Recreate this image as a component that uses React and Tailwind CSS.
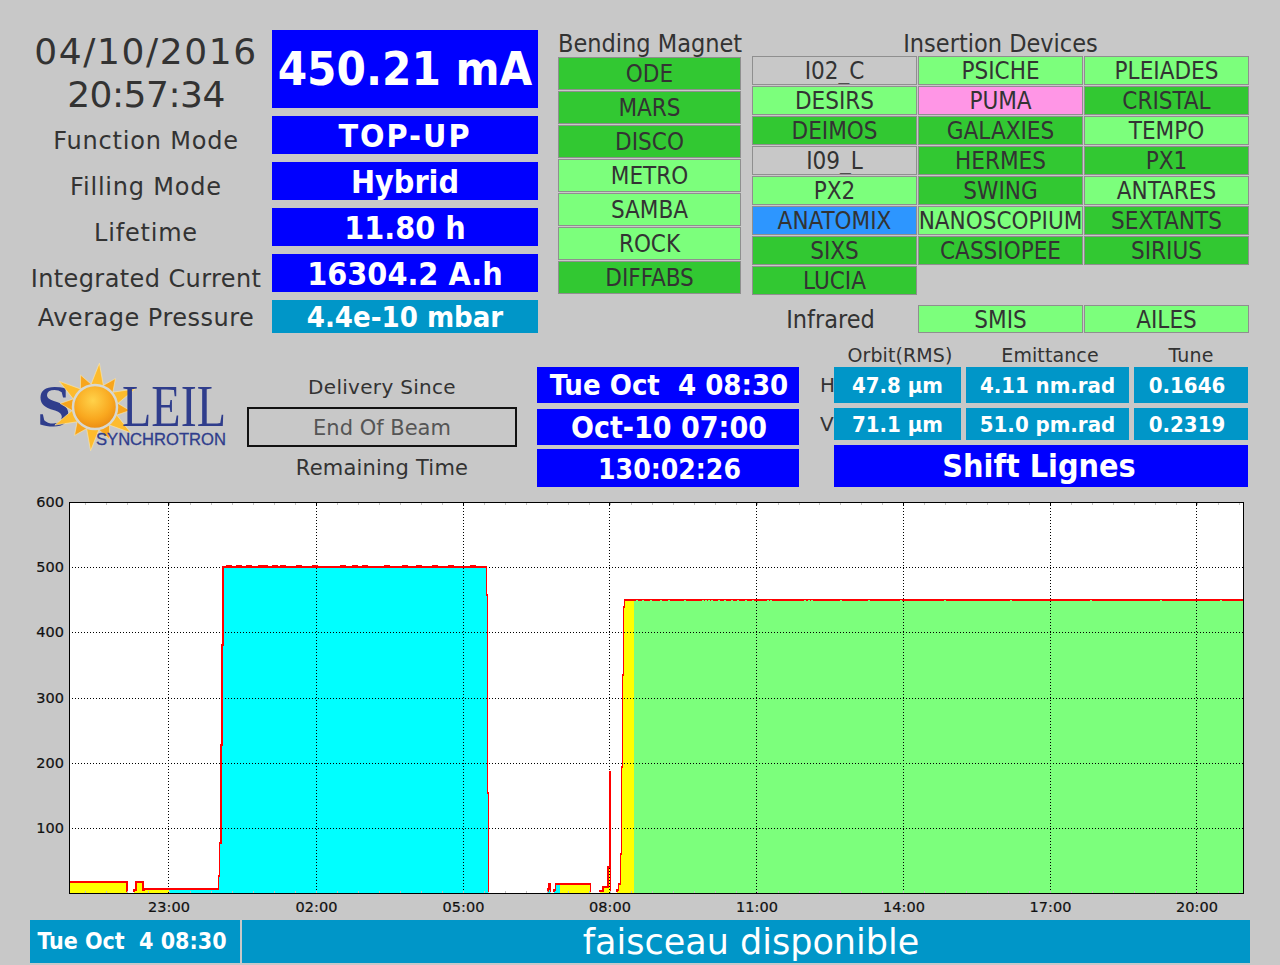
// App.jsx
const sans = "font-['DejaVu_Sans',sans-serif]";
const cond = "font-['DejaVu_Sans_Condensed','DejaVu_Sans',sans-serif]";

const LABELS = [
  { label: 'Function Mode', value: 'TOP-UP', extra: 'tracking-[2px]', track: 'tracking-[0.8px]' },
  { label: 'Filling Mode', value: 'Hybrid', extra: '', track: 'tracking-[0.8px]' },
  { label: 'Lifetime', value: '11.80 h', extra: '', track: 'tracking-[0.8px]' },
  { label: 'Integrated Current', value: '16304.2 A.h', extra: '', track: 'tracking-[0.4px]' },
];

const DARK = 'bg-[#32c832]';
const LIGHT = 'bg-[#7cff7c]';
const GRAY = 'bg-[#c8c8c8]';

const BENDING = [
  ['ODE', DARK],
  ['MARS', DARK],
  ['DISCO', DARK],
  ['METRO', LIGHT],
  ['SAMBA', LIGHT],
  ['ROCK', LIGHT],
  ['DIFFABS', DARK],
];

const INSERTION = [
  ['I02_C', GRAY],
  ['PSICHE', LIGHT],
  ['PLEIADES', LIGHT],
  ['DESIRS', LIGHT],
  ['PUMA', 'bg-[#ff96e6]'],
  ['CRISTAL', DARK],
  ['DEIMOS', DARK],
  ['GALAXIES', DARK],
  ['TEMPO', LIGHT],
  ['I09_L', GRAY],
  ['HERMES', DARK],
  ['PX1', DARK],
  ['PX2', LIGHT],
  ['SWING', DARK],
  ['ANTARES', LIGHT],
  ['ANATOMIX', 'bg-[#2d96ff]'],
  ['NANOSCOPIUM', LIGHT],
  ['SEXTANTS', DARK],
  ['SIXS', DARK],
  ['CASSIOPEE', DARK],
  ['SIRIUS', DARK],
  ['LUCIA', DARK],
];

const Beamline = ({ name, color, h }) => (
  <div className={`${h} ${color} ${cond} flex items-center justify-center border border-[#8f8f8f] text-[24px] text-[#333333] overflow-hidden whitespace-nowrap`}>
    {name}
  </div>
);

const Value = ({ children, className }) => (
  <div className={`${cond} flex items-center justify-center font-bold text-white whitespace-pre ${className}`}>
    {children}
  </div>
);

const Logo = () => {
  const rays = [];
  for (let i = 0; i < 12; i++) {
    const a = (i / 12) * Math.PI * 2 - Math.PI / 2 + 0.1;
    const r = i % 2 === 0 ? 44 : 35;
    const w = 0.3;
    const p = (ang, rad) => `${95 + Math.cos(ang) * rad},${407 + Math.sin(ang) * rad}`;
    rays.push(
      <polygon
        key={i}
        points={`${p(a - w, 22)} ${p(a, r)} ${p(a + w, 22)}`}
        fill={i % 2 === 0 ? '#fdbb2d' : '#f7a51d'}
        stroke="#ffe9a8"
        strokeWidth="0.6"
      />
    );
  }
  return (
    <svg viewBox="30 350 200 110" className="w-[200px] h-[110px] block overflow-visible">
      <defs>
        <radialGradient id="sunGrad" cx="0.45" cy="0.35" r="0.7">
          <stop offset="0" stopColor="#ffd24a" />
          <stop offset="0.6" stopColor="#f9a81f" />
          <stop offset="1" stopColor="#e8860f" />
        </radialGradient>
      </defs>
      <text x="37" y="426" fill="#2f3d8c" fontFamily="'Liberation Serif', serif" fontWeight="700" fontSize="60" textLength="34" lengthAdjust="spacingAndGlyphs">S</text>
      {rays}
      <circle cx="95" cy="407" r="22" fill="url(#sunGrad)" stroke="#d8d8d0" strokeWidth="2.5" />
      <text x="122" y="426" fill="#2f3d8c" fontFamily="'Liberation Serif', serif" fontSize="60" textLength="104" lengthAdjust="spacingAndGlyphs">LEIL</text>
      <text x="96" y="445" fill="#2f3d8c" stroke="#2f3d8c" strokeWidth="0.3" fontFamily="'Liberation Sans', sans-serif" fontSize="17" textLength="130" lengthAdjust="spacingAndGlyphs">SYNCHROTRON</text>
    </svg>
  );
};

const X0 = 69;
const X1 = 1244;
const Y0 = 893;
const Y_TOP = 502;
const Y_TICKS = [[600, 502], [500, 567], [400, 632], [300, 698], [200, 763], [100, 828]];
const X_TICKS = [[169, '23:00'], [316.5, '02:00'], [463.5, '05:00'], [610, '08:00'], [757, '11:00'], [904, '14:00'], [1050.5, '17:00'], [1197, '20:00']];

const OUTLINE = 'M69 882 H127 V893 H134 V890 H136 V882 H143 V890 H144 V889 H218.5 V876 H219.5 V843 H221 V745 H222 V645 H223 V567 H486.5 V595 H487.5 V793 H488.5 V893 H548 V889 H549 V884 H550.5 V893 H554 V890 H555.5 V884 H590.5 V893 H600 V891 H603 V887 H608 V867 H609.5 V772 H610.5 V893 H617 V890 H618.5 V884 H620.5 V854 H621.5 V767 H622.5 V675 H623.5 V607 H624.5 V600 H1244';
const CURVE = `${OUTLINE} V893 H69 Z`;

const NOISE_CYAN = [226, 236, 246, 258, 262, 272, 280, 296, 312, 340, 352, 362, 384, 402, 416, 432, 448, 470];
const NOISE_GREEN = [636, 642, 650, 660, 668, 684, 702, 705, 708, 711, 718, 724, 731, 737, 745, 752, 767, 770, 804, 808, 811, 840, 868, 900, 944, 1010, 1090, 1160, 1220];

const Chart = () => {
  const minor = [];
  for (let x = 169 - 21 * 4; x < X1; x += 146.9 / 7) minor.push(Math.round(x));
  return (
    <svg viewBox="0 495 1280 425" className="w-[1280px] h-[425px] block">
      <defs>
        <clipPath id="clipYellowA"><rect x="69" y="495" width="100" height="400" /></clipPath>
        <clipPath id="clipCyan"><rect x="169" y="495" width="391" height="400" /></clipPath>
        <clipPath id="clipYellowB"><rect x="560" y="495" width="74" height="400" /></clipPath>
        <clipPath id="clipGreen"><rect x="634" y="495" width="610" height="400" /></clipPath>
        <clipPath id="clipPlot"><rect x="69" y="495" width="1175" height="397" /></clipPath>
      </defs>
      <rect x={X0} y={Y_TOP} width={X1 - X0} height={Y0 - Y_TOP} fill="#ffffff" />
      <path d={CURVE} fill="#ffff00" clipPath="url(#clipYellowA)" />
      <path d={CURVE} fill="#00ffff" clipPath="url(#clipCyan)" />
      <path d={CURVE} fill="#ffff00" clipPath="url(#clipYellowB)" />
      <path d={CURVE} fill="#7cff7c" clipPath="url(#clipGreen)" />

      {Y_TICKS.slice(1).map(([, y]) => (
        <line key={y} x1={X0} x2={X1} y1={y + 0.5} y2={y + 0.5} stroke="#000000" strokeWidth="1" strokeDasharray="1 2" shapeRendering="crispEdges" />
      ))}
      {X_TICKS.map(([x]) => (
        <line key={x} x1={x - 0.5} x2={x - 0.5} y1={Y_TOP} y2={Y0} stroke="#000000" strokeWidth="1" strokeDasharray="1 2" shapeRendering="crispEdges" />
      ))}

      <path d={OUTLINE} fill="none" stroke="#ff0000" strokeWidth="1.2" shapeRendering="crispEdges" clipPath="url(#clipPlot)" />
      <rect x="223" y="566" width="264" height="2" fill="#ff0000" />
      <rect x="624" y="599" width="620" height="2" fill="#ff0000" />
      {NOISE_CYAN.map((x) => (
        <rect key={x} x={x} y="565" width="6" height="1" fill="#ff0000" />
      ))}
      {NOISE_GREEN.map((x) => (
        <rect key={x} x={x} y="600" width="2" height="1" fill="#7cff7c" />
      ))}

      {minor.map((x) => (
        <g key={x}>
          <line x1={x} x2={x} y1={Y_TOP + 1} y2={Y_TOP + 3} stroke="#c0c0c0" shapeRendering="crispEdges" />
          <line x1={x} x2={x} y1={Y0 - 2} y2={Y0} stroke="#c0c0c0" shapeRendering="crispEdges" />
        </g>
      ))}
      {X_TICKS.map(([x]) => (
        <line key={x} x1={x - 0.5} x2={x - 0.5} y1={Y_TOP} y2={Y_TOP + 4} stroke="#000000" shapeRendering="crispEdges" />
      ))}
      <rect x={X0 + 0.5} y={Y_TOP + 0.5} width={X1 - X0 - 1} height={Y0 - Y_TOP} fill="none" stroke="#000000" strokeWidth="1" shapeRendering="crispEdges" />

      {Y_TICKS.map(([label, y]) => (
        <text key={label} x="64" y={y + 5} textAnchor="end" fill="#111111" stroke="#111111" strokeWidth="0.2" fontFamily="'DejaVu Sans', sans-serif" fontSize="14.5">{label}</text>
      ))}
      {X_TICKS.map(([x, label]) => (
        <text key={label} x={x} y="912" textAnchor="middle" fill="#111111" stroke="#111111" strokeWidth="0.2" fontFamily="'DejaVu Sans', sans-serif" fontSize="14.5">{label}</text>
      ))}
    </svg>
  );
};

const App = () => {
  return (
    <div className={`w-[1280px] h-[965px] bg-[#c8c8c8] overflow-hidden text-[#333333] ${sans}`}>
      {/* Top: machine state and beamlines */}
      <div className="flex h-[345px] pt-[30px] pl-[30px]">
        <div className="grid grid-cols-[232px_266px] gap-x-[10px] gap-y-[8px] content-start">
          <div className="h-[78px] text-center text-[36px] leading-[43px] whitespace-nowrap">
            <div className="tracking-[1.6px]">04/10/2016</div>
            <div className="tracking-[-0.5px]">20:57:34</div>
          </div>
          <Value className="h-[78px] bg-[#0000ff] text-[47px]">450.21 mA</Value>

          {LABELS.map((row) => (
            <div key={row.label} className="contents">
              <div className={`h-[38px] flex items-center justify-center pt-[12px] text-[24px] whitespace-nowrap ${row.track}`}>
                {row.label}
              </div>
              <Value className={`h-[38px] pt-[2px] text-[32px] bg-[#0000ff] ${row.extra}`}>{row.value}</Value>
            </div>
          ))}

          <div className="h-[33px] flex items-center justify-center pt-[2px] text-[24px] tracking-[0.5px] whitespace-nowrap">
            Average Pressure
          </div>
          <Value className="h-[33px] pt-[2px] bg-[#0096c8] text-[29px]">4.4e-10 mbar</Value>
        </div>

        <div className="ml-[20px] w-[183px]">
          <div className={`${cond} h-[27px] text-center text-[25px] leading-[27px] whitespace-nowrap`}>Bending Magnet</div>
          <div className="flex flex-col gap-[1px]">
            {BENDING.map(([name, color]) => (
              <Beamline key={name} name={name} color={color} h="h-[33px]" />
            ))}
          </div>
        </div>

        <div className="ml-[11px] w-[497px]">
          <div className={`${cond} h-[26px] text-center text-[25px] leading-[27px]`}>Insertion Devices</div>
          <div className="grid grid-cols-[165px_165px_165px] gap-[1px]">
            {INSERTION.map(([name, color]) => (
              <Beamline key={name} name={name} color={color} h="h-[29px]" />
            ))}
          </div>
          <div className="mt-[10px] grid grid-cols-[165px_165px_165px] gap-[1px]">
            <div className={`${cond} h-[28px] flex items-center justify-center pr-[8px] pt-[1px] text-[25px]`}>Infrared</div>
            <Beamline name="SMIS" color={LIGHT} h="h-[28px] pt-[1px]" />
            <Beamline name="AILES" color={LIGHT} h="h-[28px] pt-[1px]" />
          </div>
        </div>
      </div>

      {/* Middle: delivery schedule and beam parameters */}
      <div className="flex h-[150px] pl-[30px]">
        <div className="w-[200px] pt-[5px]">
          <Logo />
        </div>
        <div className="ml-[17px] w-[270px] pt-[22px]">
          <div className="h-[40px] flex items-center justify-center text-[20px] tracking-[0.3px]">Delivery Since</div>
          <div className="h-[40px] flex items-center justify-center pt-[3px] border-2 border-[#111111] text-[21px] text-[#555555]">End Of Beam</div>
          <div className="h-[40px] flex items-center justify-center pt-[3px] text-[21px] tracking-[0.2px]">Remaining Time</div>
        </div>
        <div className="ml-[20px] w-[262px] pt-[22px]">
          <Value className="h-[36px] pt-[2px] pl-[2px] bg-[#0000ff] text-[29px]">{'Tue Oct  4 08:30'}</Value>
          <Value className="h-[36px] pl-[2px] mt-[6px] bg-[#0000ff] text-[30px]">Oct-10 07:00</Value>
          <Value className="h-[38px] pt-[3px] pl-[3px] mt-[4px] bg-[#0000ff] text-[28px]">130:02:26</Value>
        </div>
        <div className="ml-[21px] w-[428px]">
          <div className="flex h-[22px] pl-[14px] text-[19px] tracking-[0.1px] leading-[20px]">
            <div className="w-[132px] text-center">Orbit(RMS)</div>
            <div className="w-[168px] text-center">Emittance</div>
            <div className="w-[114px] text-center">Tune</div>
          </div>
          <div className="flex h-[36px]">
            <div className="w-[14px] flex items-center text-[20px]">H</div>
            <Value className="w-[127px] bg-[#0096c8] text-[22px]">47.8 µm</Value>
            <Value className="w-[163px] ml-[5px] bg-[#0096c8] text-[22px]">4.11 nm.rad</Value>
            <Value className="w-[114px] ml-[5px] pr-[8px] bg-[#0096c8] text-[22px]">0.1646</Value>
          </div>
          <div className="flex h-[32px] mt-[5px]">
            <div className="w-[14px] flex items-center text-[20px] overflow-hidden">V</div>
            <Value className="w-[127px] bg-[#0096c8] text-[22px]">71.1 µm</Value>
            <Value className="w-[163px] ml-[5px] bg-[#0096c8] text-[22px]">51.0 pm.rad</Value>
            <Value className="w-[114px] ml-[5px] pr-[8px] bg-[#0096c8] text-[22px]">0.2319</Value>
          </div>
          <Value className="h-[42px] mt-[5px] ml-[14px] pr-[4px] bg-[#0000ff] text-[32px]">Shift Lignes</Value>
        </div>
      </div>

      {/* Current history */}
      <Chart />

      {/* Status bar */}
      <div className="flex h-[43px] pl-[30px] gap-[2px]">
        <Value className="w-[210px] pr-[6px] bg-[#0096c8] text-[23px]">{'Tue Oct  4 08:30'}</Value>
        <div className="w-[1008px] flex items-center justify-center pl-[10px] pt-[2px] bg-[#0096c8] text-white text-[35px]">faisceau disponible</div>
      </div>
    </div>
  );
};

export default App;
